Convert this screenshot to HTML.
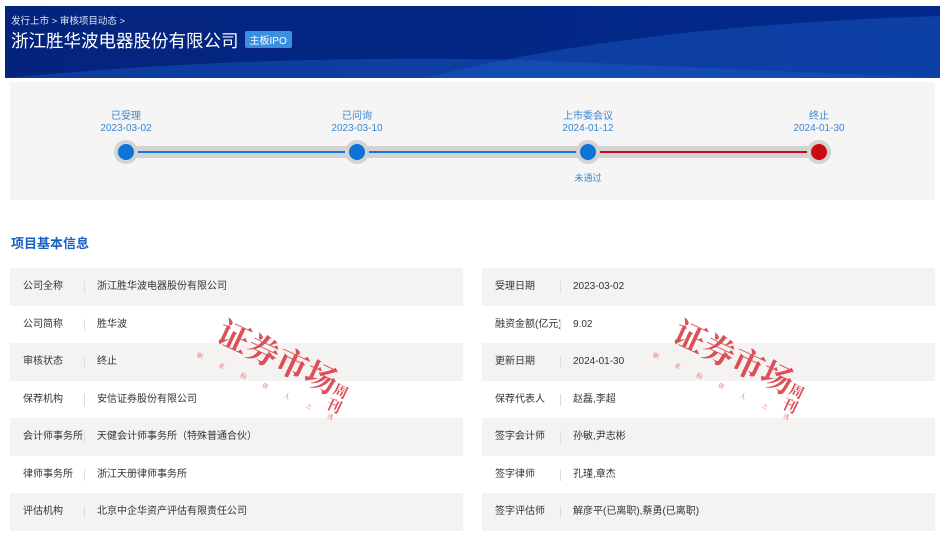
<!DOCTYPE html>
<html><head><meta charset="utf-8"><style>
*{margin:0;padding:0;box-sizing:border-box}
body{width:948px;height:546px;background:#fff;font-family:"Liberation Sans","Noto Sans CJK SC",sans-serif;position:relative;overflow:hidden}
.hdr{position:absolute;left:5px;top:6px;width:935px;height:72px;background:linear-gradient(90deg,#04237d,#022a8c);overflow:hidden}
.crumb{position:absolute;left:6px;top:7px;font-size:9.5px;color:#dfe6f5}
.title{position:absolute;left:6px;top:22px;font-size:17.5px;color:#fff}
.tag{display:inline-block;vertical-align:3px;margin-left:6px;background:#3b8ee0;color:#fff;font-size:10px;padding:1px 5px;border-radius:2px}
.tl{position:absolute;left:10px;top:82px;width:925px;height:118px;background:#f5f5f5}
.lbl{position:absolute;top:29px;width:100px;margin-left:-50px;text-align:center;font-size:10px;line-height:12px;color:#3a86d4}
.track{position:absolute;top:64px;height:12px;background:#d3d3d3}
.line{position:absolute;top:69px;height:2px}
.dot{position:absolute;top:58px;width:24px;height:24px;margin-left:-12px;border-radius:50%;background:#d3d3d3}
.dot i{position:absolute;left:4px;top:4px;width:16px;height:16px;border-radius:50%}
.sec{position:absolute;left:11px;top:233px;font-size:13px;font-weight:bold;color:#1a5fc4}
.row{position:absolute;height:38px;font-size:10px;color:#333;line-height:38px}
.row.g{background:#f4f3f2}
.row span{position:absolute;left:13px}
.row b{position:absolute;left:74px;top:13px;width:1px;height:12px;background:#ddd}
.row em{font-style:normal;position:absolute;left:87px}
.r em{left:91px}
.r b{left:78px}
.wm{position:absolute;color:#d8333b;font-family:"Noto Serif CJK SC",serif;font-size:32px;font-weight:bold;transform:rotate(25deg);transform-origin:0 0;opacity:.85;white-space:nowrap}
.wm small{font-size:15px;display:inline-block;width:16px;line-height:16px;white-space:normal;vertical-align:-14px}
.wm div{font-size:6px;letter-spacing:18px;margin-top:-2px;margin-left:-10px;font-weight:normal}
</style></head><body>
<div class="hdr">
<svg width="935" height="72" style="position:absolute;left:0;top:0">
<path d="M0 72 Q250 48 520 54 Q700 62 935 72 Z" fill="#1552b8" opacity=".55"/>
<path d="M420 72 Q620 20 935 10 L935 72 Z" fill="#1a5bc4" opacity=".45"/>
</svg>
<div class="crumb">发行上市 &gt; 审核项目动态 &gt;</div>
<div class="title">浙江胜华波电器股份有限公司<span class="tag">主板IPO</span></div>
</div>
<div class="tl">
<div class="track" style="left:116px;width:693px"></div>
<div class="line" style="left:116px;width:462px;background:#1677d4"></div>
<div class="line" style="left:578px;width:231px;background:#cc0a12"></div>
<div class="dot" style="left:116px"><i style="background:#0d74d6"></i></div>
<div class="dot" style="left:347px"><i style="background:#0d74d6"></i></div>
<div class="dot" style="left:578px"><i style="background:#0d74d6"></i></div>
<div class="dot" style="left:809px"><i style="background:#cc0a12"></i></div>
<div class="lbl" style="left:116px">已受理<br>2023-03-02</div>
<div class="lbl" style="left:347px">已问询<br>2023-03-10</div>
<div class="lbl" style="left:578px">上市委会议<br>2024-01-12</div>
<div class="lbl" style="left:809px">终止<br>2024-01-30</div>
<div class="lbl" style="left:578px;top:90px;font-size:9px">未通过</div>
</div>
<div class="sec">项目基本信息</div>

<div class="row g" style="left:10px;top:268px;width:453px"><span>公司全称</span><b></b><em>浙江胜华波电器股份有限公司</em></div>
<div class="row" style="left:10px;top:306px;width:453px"><span>公司简称</span><b></b><em>胜华波</em></div>
<div class="row g" style="left:10px;top:343px;width:453px"><span>审核状态</span><b></b><em>终止</em></div>
<div class="row" style="left:10px;top:381px;width:453px"><span>保荐机构</span><b></b><em>安信证券股份有限公司</em></div>
<div class="row g" style="left:10px;top:418px;width:453px"><span>会计师事务所</span><b></b><em>天健会计师事务所（特殊普通合伙）</em></div>
<div class="row" style="left:10px;top:456px;width:453px"><span>律师事务所</span><b></b><em>浙江天册律师事务所</em></div>
<div class="row g" style="left:10px;top:493px;width:453px"><span>评估机构</span><b></b><em>北京中企华资产评估有限责任公司</em></div>

<div class="row g r" style="left:482px;top:268px;width:453px"><span>受理日期</span><b></b><em>2023-03-02</em></div>
<div class="row r" style="left:482px;top:306px;width:453px"><span>融资金额(亿元)</span><b></b><em>9.02</em></div>
<div class="row g r" style="left:482px;top:343px;width:453px"><span>更新日期</span><b></b><em>2024-01-30</em></div>
<div class="row r" style="left:482px;top:381px;width:453px"><span>保荐代表人</span><b></b><em>赵磊,李超</em></div>
<div class="row g r" style="left:482px;top:418px;width:453px"><span>签字会计师</span><b></b><em>孙敏,尹志彬</em></div>
<div class="row r" style="left:482px;top:456px;width:453px"><span>签字律师</span><b></b><em>孔瑾,章杰</em></div>
<div class="row g r" style="left:482px;top:493px;width:453px"><span>签字评估师</span><b></b><em>解彦平(已离职),蔡勇(已离职)</em></div>

<div class="wm" style="left:230px;top:308px">证券市场<small>周刊</small><div>职业投资人之选</div></div>
<div class="wm" style="left:686px;top:308px">证券市场<small>周刊</small><div>职业投资人之选</div></div>
</body></html>
